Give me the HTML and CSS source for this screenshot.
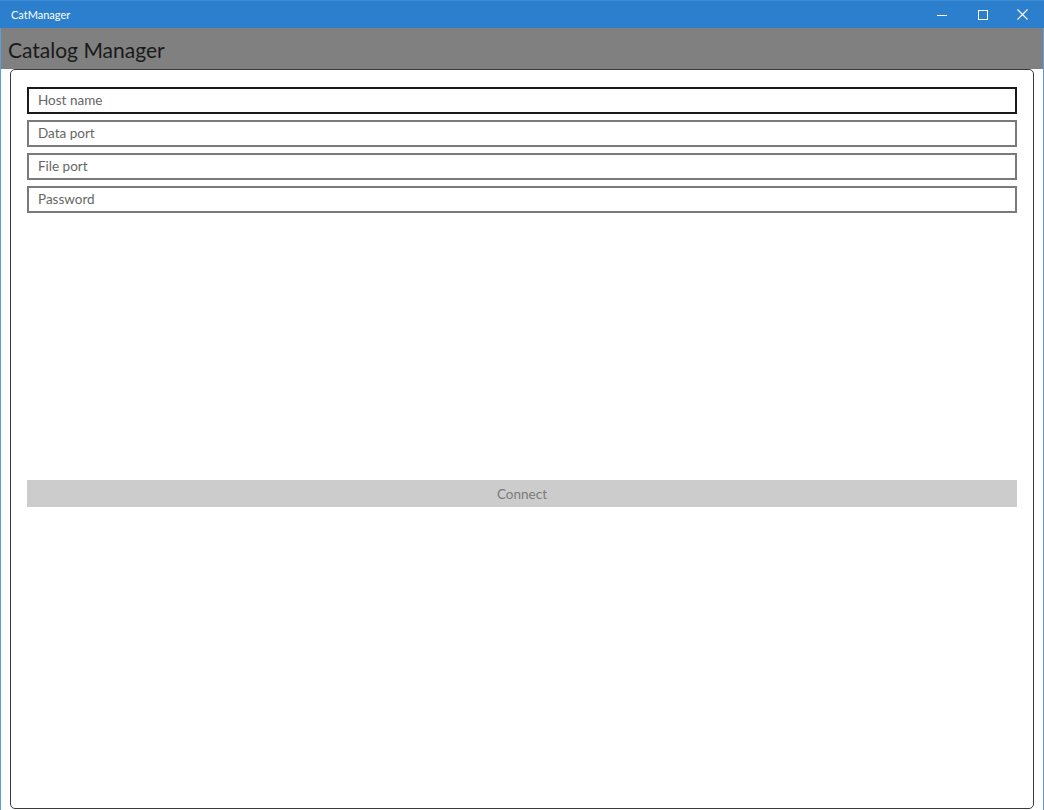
FILE: index.html
```html
<!DOCTYPE html>
<html>
<head>
<meta charset="utf-8">
<link rel="stylesheet" href="styles.css">
</head>
<body>
<div class="window">
  <div class="titlebar">
    <span class="app-name">CatManager</span>
    <div class="controls">
      <span class="ctl ctl-min">
        <svg width="10" height="10" viewBox="0 0 10 10"><line x1="0" y1="5.5" x2="10" y2="5.5" stroke="#fff" stroke-width="1"/></svg>
      </span>
      <span class="ctl ctl-max">
        <svg width="10" height="10" viewBox="0 0 10 10"><rect x="0.5" y="0.5" width="9" height="9" fill="none" stroke="#fff" stroke-width="1"/></svg>
      </span>
      <span class="ctl ctl-close">
        <svg width="11" height="11" viewBox="0 0 11 11"><path d="M0.5 0.5 L10.5 10.5 M10.5 0.5 L0.5 10.5" stroke="#fff" stroke-width="1.1" fill="none"/></svg>
      </span>
    </div>
  </div>
  <div class="frame">
    <div class="header">Catalog Manager</div>
    <div class="content">
      <div class="panel">
        <div class="fields">
          <div class="field focused">Host name</div>
          <div class="field">Data port</div>
          <div class="field">File port</div>
          <div class="field">Password</div>
        </div>
        <div class="button">Connect</div>
      </div>
    </div>
  </div>
</div>
</body>
</html>
```
FILE: styles.css
```css
html, body {
  margin: 0;
  padding: 0;
  background: #ffffff;
}
body {
  font-family: "Segoe UI", Lato, "Noto Sans", sans-serif;
  width: 1044px;
  height: 810px;
  overflow: hidden;
}
.window {
  width: 1044px;
  height: 810px;
  display: flex;
  flex-direction: column;
}
.titlebar {
  height: 28px;
  background: #2b7fcc;
  border-top: 1px solid #3a89d2;
  box-sizing: border-box;
  display: flex;
  align-items: center;
  justify-content: space-between;
  color: #ffffff;
}
.app-name {
  font-size: 11px;
  padding-left: 11px;
  padding-bottom: 1px;
}
.controls {
  display: flex;
  height: 100%;
}
.ctl {
  display: flex;
  align-items: center;
  justify-content: center;
}
.ctl-min {
  width: 48px;
}
.ctl-max {
  width: 34px;
}
.ctl-close {
  width: 44px;
}
.frame {
  flex: 1;
  display: flex;
  flex-direction: column;
  border-left: 1px solid #5c9fdd;
  border-right: 1px solid #5c9fdd;
}
.header {
  height: 41px;
  background: #808080;
  color: #1a1a1a;
  font-size: 21px;
  line-height: 43px;
  padding-left: 7px;
  box-sizing: border-box;
}
.content {
  flex: 1;
  padding: 0 9px 1px 9px;
  display: flex;
}
.panel {
  flex: 1;
  border: 1px solid #3a3a3a;
  border-radius: 5px;
  padding: 17px 16px 0 16px;
  display: flex;
  flex-direction: column;
}
.fields {
  display: flex;
  flex-direction: column;
  gap: 6px;
}
.field {
  height: 27px;
  box-sizing: border-box;
  border: 2px solid #7a7a7a;
  font-size: 13.5px;
  color: #666666;
  padding-left: 9px;
  line-height: 23px;
}
.field.focused {
  border-color: #1a1a1a;
}
.button {
  margin-top: 267px;
  height: 27px;
  background: #cccccc;
  color: #7a7a7a;
  font-size: 13.5px;
  text-align: center;
  line-height: 28px;
}
```
